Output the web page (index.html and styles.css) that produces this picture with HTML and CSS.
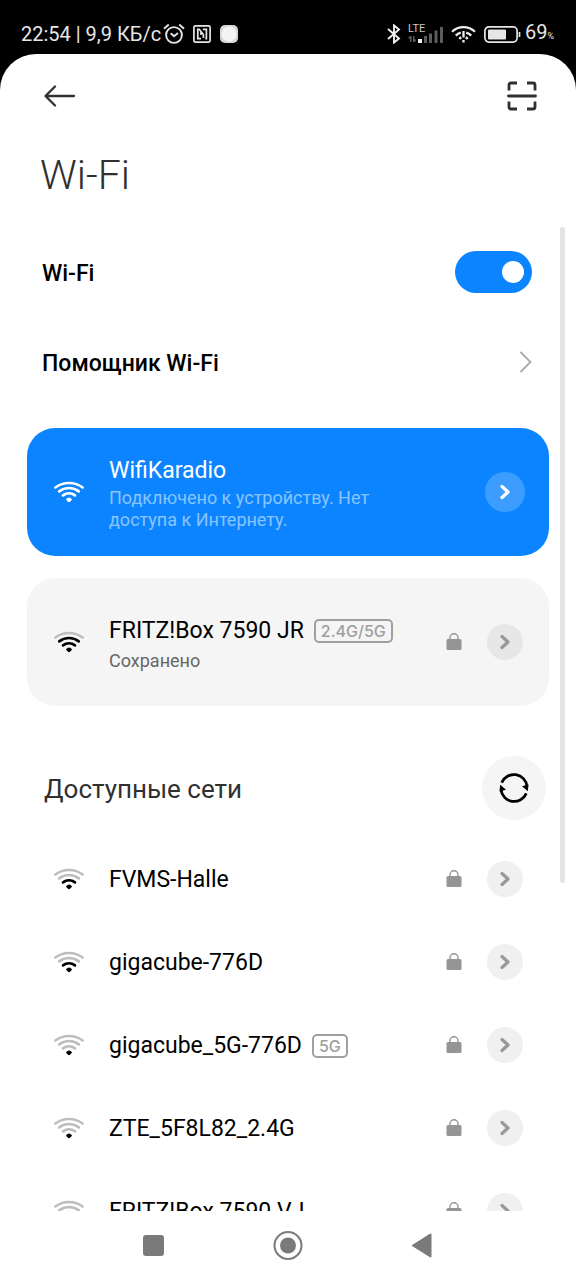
FILE: index.html
```html
<!DOCTYPE html>
<html lang="ru">
<head>
<meta charset="utf-8">
<meta name="viewport" content="width=device-width, initial-scale=1">
<title>Wi-Fi</title>
<link rel="stylesheet" href="styles.css">
</head>
<body>
<svg class="sprite" aria-hidden="true">
  <symbol id="wifi" viewBox="0 0 30 22">
    <g fill="none" stroke-width="2.6" stroke-linecap="round">
      <path class="arc4" d="M1.4 6.5A23 23 0 0 1 28.6 6.5"/>
      <path class="arc3" d="M5.2 10.4A16 16 0 0 1 24.8 10.4"/>
      <path class="arc2" d="M9 14.4A10 10 0 0 1 21 14.4"/>
    </g>
    <path class="dot" d="M12 18.2Q15 15 18 18.2Q18 19 16 20.800Q15 21.600 14 20.800Q12 19 12 18.200Z"/>
  </symbol>
  <symbol id="lock" viewBox="0 0 16 18">
    <rect x="0.5" y="6" width="15" height="11" rx="1.5" fill="#959595"/>
    <path d="M4 6.500V4.700A4 4 0 0 1 12 4.700V6.500" fill="none" stroke="#959595" stroke-width="1.4"/>
  </symbol>
  <symbol id="chevron" viewBox="0 0 10 16">
    <path d="M2 2.5L8 8L2 13.5" fill="none" stroke="currentColor" stroke-width="3.2" stroke-linecap="round" stroke-linejoin="round"/>
  </symbol>
</svg>

<div class="status">
  <div class="status-group">
    <span>22:54 | 9,9 КБ/с</span>
    <svg class="i-alarm" width="22" height="22" viewBox="0 0 22 22" fill="none" stroke="#e6e6e6" stroke-width="1.9" stroke-linecap="round">
      <circle cx="11" cy="12" r="7.9"/><path d="M8.3 10.7L11 13.2L14.4 10.4M1.5 5.2L5.2 2M20.5 5.2L16.8 2"/>
    </svg>
    <svg class="i-nfc" width="18" height="18" viewBox="0 0 18 18" fill="none" stroke="#e6e6e6">
      <rect x="0.9" y="0.9" width="16.2" height="16.2" rx="1.5" stroke-width="1.7"/>
      <path d="M8 13.700H4.800V4.300H6.200L10.400 9.500V13M9.800 4.300H13.400V13.700H12.300M8 7V10" stroke-width="1.700"/>
    </svg>
    <svg class="i-app" width="18" height="18" viewBox="0 0 18 18"><rect width="18" height="18" rx="5" fill="#d8d8d8"/><circle cx="9" cy="9" r="7.500" fill="#f4f4f4"/></svg>
  </div>
  <div class="status-group">
    <svg width="14" height="20" viewBox="0 0 14 20" fill="none" stroke="#f0f0f0" stroke-width="1.9"><path d="M1 5L12 14.5L7 18.6V1.4L12 5.5L1 15"/></svg>
    <svg class="i-cell" width="36" height="20" viewBox="0 0 36 20">
      <text class="lte" x="0" y="8">LTE</text>
      <g fill="#5c5c5c"><path d="M2 12H3.5V18H2zM0 14L2 12V15zM5 12H6.500V18H5zM8.500 16L6.500 18V15z"/><rect x="16" y="12" width="3" height="7"/><rect x="21" y="9.500" width="3" height="9.500"/><rect x="26.500" y="6.500" width="3" height="12.500"/><rect x="32" y="3" width="3" height="16"/></g>
      <rect x="10" y="15" width="4" height="4" fill="#f0f0f0"/>
    </svg>
    <svg class="i-wifi" width="25" height="18" viewBox="0 0 25 18" fill="none" stroke="#ededed" stroke-width="2.3">
      <path d="M1 6.800A16.500 16.500 0 0 1 24 6.800"/><path d="M4.800 10.600A11 11 0 0 1 9.800 7.600M15.200 7.600A11 11 0 0 1 20.200 10.600M8.300 14A6 6 0 0 1 10.300 12.400M14.700 12.400A6 6 0 0 1 16.700 14"/><path d="M12.500 6V12.500M12.500 15V17.500"/>
    </svg>
    <svg class="i-battery" width="38" height="17" viewBox="0 0 38 17"><rect x="0.9" y="0.9" width="32.200" height="15.200" rx="4" fill="none" stroke="#e6e6e6" stroke-width="1.700"/><rect x="4" y="3.500" width="18" height="10" rx="1" fill="#e6e6e6"/><path d="M35.500 6V11" stroke="#e6e6e6" stroke-width="1.700"/></svg>
    <span class="charge">69<small>%</small></span>
  </div>
</div>

<main class="sheet">
  <header class="toolbar">
    <button class="plain" aria-label="Назад">
      <svg width="32" height="22" viewBox="0 0 32 22" fill="none" stroke="#303030" stroke-width="2.300" stroke-linecap="round" stroke-linejoin="round"><path d="M30 11H2M11 1.500L1.500 11L11 20.500"/></svg>
    </button>
    <button class="plain" aria-label="Сканировать">
      <svg width="30" height="30" viewBox="0 0 30 30" fill="none" stroke="#303030" stroke-width="2.800"><path d="M2 9.500V4Q2 2 4 2H10M20 2H26Q28 2 28 4V9.500M28 20.500V26Q28 28 26 28H20M10 28H4Q2 28 2 26V20.500"/><path d="M1.500 15H28.500" stroke-linecap="round"/></svg>
    </button>
  </header>
  <h1>Wi-Fi</h1>

  <div class="content">
    <div class="setting">
      <label for="wifi-switch">Wi-Fi</label>
      <input class="switch" type="checkbox" role="switch" id="wifi-switch" checked>
    </div>
    <a class="setting" href="#assistant">
      <span>Помощник Wi-Fi</span>
      <svg width="13" height="22" viewBox="0 0 13 22" fill="none" stroke="#a8a8a8" stroke-width="1.800"><path d="M1.500 1L11.500 11L1.500 21"/></svg>
    </a>

    <div class="cards">
      <section class="net card connected">
        <svg class="signal s4"><use href="#wifi"/></svg>
        <div class="info">
          <div class="name">WifiKaradio</div>
          <div class="note">Подключено к устройству. Нет доступа к Интернету.</div>
        </div>
        <button class="more" aria-label="Подробнее"><svg class="chev"><use href="#chevron"/></svg></button>
      </section>
      <section class="net card saved">
        <svg class="signal s3"><use href="#wifi"/></svg>
        <div class="info">
          <div class="name">FRITZ!Box 7590 JR<span class="badge">2.4G/5G</span></div>
          <div class="note">Сохранено</div>
        </div>
        <svg class="lock"><use href="#lock"/></svg>
        <button class="more" aria-label="Подробнее"><svg class="chev"><use href="#chevron"/></svg></button>
      </section>
    </div>

    <div class="section-head">
      <h2>Доступные сети</h2>
      <button class="refresh" aria-label="Обновить">
        <svg width="30" height="30" viewBox="0 0 30 30" fill="none" stroke="#000" stroke-width="2.700"><path d="M2.700 9.600A13.200 13.200 0 0 1 28 13.500M27.300 20.400A13.200 13.200 0 0 1 2 16.500"/><path d="M23 13.300L29.500 11.500L28.800 18.200ZM7 16.700L0.500 18.500L1.200 11.800Z" fill="#000" stroke="none"/></svg>
      </button>
    </div>

    <ul class="list">
      <li class="net">
        <svg class="signal s2"><use href="#wifi"/></svg>
        <div class="info"><div class="name">FVMS-Halle</div></div>
        <svg class="lock"><use href="#lock"/></svg>
        <button class="more" aria-label="Подробнее"><svg class="chev"><use href="#chevron"/></svg></button>
      </li>
      <li class="net">
        <svg class="signal s2"><use href="#wifi"/></svg>
        <div class="info"><div class="name">gigacube-776D</div></div>
        <svg class="lock"><use href="#lock"/></svg>
        <button class="more" aria-label="Подробнее"><svg class="chev"><use href="#chevron"/></svg></button>
      </li>
      <li class="net">
        <svg class="signal s1"><use href="#wifi"/></svg>
        <div class="info"><div class="name">gigacube_5G-776D<span class="badge">5G</span></div></div>
        <svg class="lock"><use href="#lock"/></svg>
        <button class="more" aria-label="Подробнее"><svg class="chev"><use href="#chevron"/></svg></button>
      </li>
      <li class="net">
        <svg class="signal s1"><use href="#wifi"/></svg>
        <div class="info"><div class="name">ZTE_5F8L82_2.4G</div></div>
        <svg class="lock"><use href="#lock"/></svg>
        <button class="more" aria-label="Подробнее"><svg class="chev"><use href="#chevron"/></svg></button>
      </li>
      <li class="net">
        <svg class="signal s1"><use href="#wifi"/></svg>
        <div class="info"><div class="name">FRITZ!Box 7590 VJ</div></div>
        <svg class="lock"><use href="#lock"/></svg>
        <button class="more" aria-label="Подробнее"><svg class="chev"><use href="#chevron"/></svg></button>
      </li>
    </ul>
    <div class="scrollbar"></div>
  </div>
</main>

<nav class="navbar">
  <button class="plain" aria-label="Недавние"><svg width="32" height="32" viewBox="0 0 32 32"><rect x="5" y="5" width="21" height="21" rx="3" fill="#7a7a7a"/></svg></button>
  <button class="plain" aria-label="Домой"><svg width="32" height="32" viewBox="0 0 32 32"><circle cx="16" cy="15.500" r="13.500" fill="none" stroke="#7a7a7a" stroke-width="2"/><circle cx="16" cy="15.500" r="8" fill="#7a7a7a"/></svg></button>
  <button class="plain" aria-label="Назад"><svg width="32" height="32" viewBox="0 0 32 32"><path d="M7 15.500L24.500 4.500V26.500Z" fill="#7a7a7a" stroke="#7a7a7a" stroke-width="2" stroke-linejoin="round"/></svg></button>
</nav>
</body>
</html>
```
FILE: styles.css
```css
* {
  box-sizing: border-box;
}

body {
  margin: 0;
  height: 100vh;
  display: flex;
  flex-direction: column;
  background: #000;
  color: #000;
  font-family: Roboto, "Liberation Sans", sans-serif;
}

svg {
  display: block;
  flex: none;
}

button {
  padding: 0;
  border: 0;
  font: inherit;
  cursor: pointer;
}

h1,
h2 {
  margin: 0;
}

.sprite {
  position: absolute;
  width: 0;
  height: 0;
}

.plain {
  background: none;
}

/* status bar */
.status {
  flex: none;
  height: 54px;
  padding: 14px 22px 0 21px;
  display: flex;
  justify-content: space-between;
  color: #e6e6e6;
  font-size: 20px;
  line-height: 42px;
}

.status-group {
  height: 40px;
  display: flex;
  align-items: center;
}

.i-alarm {
  margin-left: 2px;
}

.i-nfc {
  margin-left: 8px;
}

.i-app {
  margin-left: 9px;
}

.i-cell {
  margin-left: 7px;
}

.i-wifi {
  margin-left: 7px;
}

.i-battery {
  margin-left: 8px;
}

.lte {
  fill: #c8c8c8;
  font-size: 11px;
}

.charge {
  margin-left: 3px;
  display: flex;
  align-items: baseline;
}

.charge small {
  font-size: 9px;
}

/* sheet */
.sheet {
  flex: 1;
  min-height: 0;
  display: flex;
  flex-direction: column;
  background: #fff;
  border-radius: 36px 36px 0 0;
}

.toolbar {
  flex: none;
  height: 84px;
  padding: 0 39px 0 44px;
  display: flex;
  align-items: center;
  justify-content: space-between;
}

h1 {
  flex: none;
  padding: 1px 40px 16px;
  color: #303030;
  font-size: 41px;
  font-weight: 300;
  line-height: 72px;
}

.content {
  position: relative;
  flex: 1;
  min-height: 0;
  overflow: hidden;
}

.scrollbar {
  position: absolute;
  top: 0;
  right: 11px;
  width: 5px;
  height: 656px;
  border-radius: 3px;
  background: #e4e4e4;
}

.setting {
  height: 90px;
  padding: 0 44px 0 42px;
  display: flex;
  align-items: center;
  justify-content: space-between;
  color: #000;
  font-size: 23px;
  font-weight: 500;
  text-decoration: none;
}

.setting label,
.setting span {
  padding-top: 2px;
}

.switch {
  appearance: none;
  width: 77px;
  height: 42px;
  margin: 0;
  padding: 0 8px;
  display: flex;
  align-items: center;
  border-radius: 21px;
  background: #c8c8c8;
}

.switch:checked {
  justify-content: flex-end;
  background: #0d84ff;
}

.switch::before {
  content: "";
  width: 22px;
  height: 22px;
  border-radius: 50%;
  background: #fff;
}

.cards {
  padding: 21px 27px 0;
  display: grid;
  gap: 22px;
}

.net {
  height: 83px;
  padding: 0 24px 0 27px;
  display: flex;
  align-items: center;
}

.card {
  height: 128px;
  border-radius: 28px;
}

.connected {
  background: #0d84ff;
}

.saved {
  background: #f5f5f5;
}

.info {
  flex: 1;
  min-width: 0;
  margin-left: 25px;
  padding-top: 2px;
}

.name {
  display: flex;
  align-items: center;
  font-size: 23px;
  line-height: 32px;
  white-space: nowrap;
}

.note {
  max-width: 290px;
  color: #666;
  font-size: 18px;
  line-height: 22px;
}

.saved .note {
  margin-top: 3px;
}

.connected .name {
  color: #fff;
}

.connected .note {
  color: #8ac4ff;
}

.badge {
  margin-left: 10px;
  padding: 0 5px;
  border: 2px solid #a0a0a0;
  border-radius: 5px;
  color: #a0a0a0;
  font-family: Inter, Roboto, sans-serif;
  font-size: 16px;
  font-weight: 500;
  line-height: 20px;
}

.signal {
  width: 30px;
  height: 22px;
}

.lock {
  width: 16px;
  height: 18px;
  margin-right: 25px;
}

.more {
  width: 36px;
  height: 36px;
  margin-right: 2px;
  display: grid;
  place-items: center;
  border-radius: 50%;
  background: #f0f0f0;
  color: #989898;
}

.saved .more {
  background: #e7e7e7;
}

.connected .more {
  width: 40px;
  height: 40px;
  margin-right: 0;
  background: #3d9dff;
  color: #fff;
}

.chev {
  width: 10px;
  height: 16px;
}

/* signal strength: the arcs inherit these colours */
.s1 { --a4: #bdbdbd; --a3: #bdbdbd; --a2: #bdbdbd; --a1: #000; }
.s2 { --a4: #bdbdbd; --a3: #bdbdbd; --a2: #000; --a1: #000; }
.s3 { --a4: #bdbdbd; --a3: #000; --a2: #000; --a1: #000; }
.s4 { --a4: #fff; --a3: #fff; --a2: #fff; --a1: #fff; }

.arc4 { stroke: var(--a4); }
.arc3 { stroke: var(--a3); }
.arc2 { stroke: var(--a2); }
.dot { fill: var(--a1); }

.section-head {
  padding: 50px 30px 17px 44px;
  display: flex;
  align-items: center;
  justify-content: space-between;
}

h2 {
  padding-top: 2px;
  color: #303030;
  font-size: 26px;
  font-weight: 400;
}

.refresh {
  width: 64px;
  height: 64px;
  display: grid;
  place-items: center;
  border-radius: 50%;
  background: #f5f5f5;
}

.list {
  margin: 0;
  padding: 0 27px;
  list-style: none;
}

/* system navigation */
.navbar {
  flex: none;
  height: 69px;
  display: flex;
  align-items: center;
  justify-content: center;
  gap: 102px;
  background: #fff;
}
```
